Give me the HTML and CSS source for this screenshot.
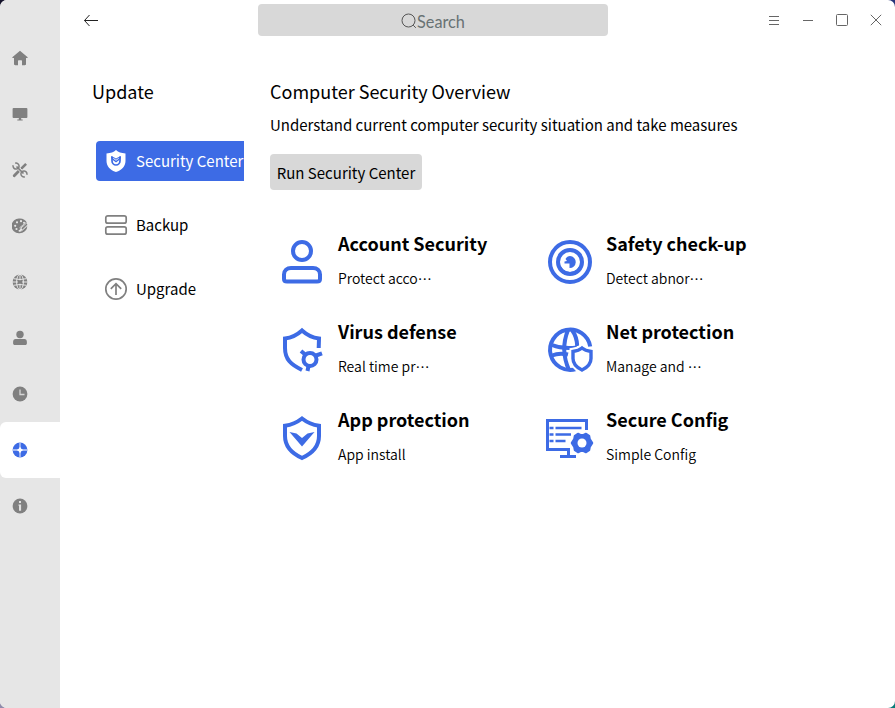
FILE: index.html
```html
<!DOCTYPE html>
<html lang="zh-CN">
<head>
<meta charset="utf-8">
<title>Update</title>
<link rel="stylesheet" href="styles.css">
</head>
<body>
<div class="window">
  <nav class="rail">
    <a class="rail-item"><svg viewBox="0 0 16 16"><path d="M8 .7 15.4 7c.5.5.3 1-.3 1H14v6c0 .8-.4 1.2-1.2 1.2H10v-4c0-.7-.3-1-1-1H7c-.7 0-1 .3-1 1v4H3.2c-.8 0-1.2-.4-1.2-1.2V8H.9C.3 8 .1 7.500.6 7z"/></svg></a>
    <a class="rail-item"><svg viewBox="0 0 16 16"><path d="M1.500 2h13c.6 0 .9.3.9.9v8.200c0 .6-.3.9-.9.900H9.200v1.500h1.500v1H5.300v-1h1.500V12H1.500c-.6 0-.9-.3-.9-.9V2.900c0-.6.3-.9.900-.9z"/></svg></a>
    <a class="rail-item"><svg viewBox="0 0 16 16"><path d="m2.200 13.800 4.400-4.500" fill="none" stroke="#808080" stroke-width="2.800" stroke-linecap="round"/><path d="m9.300 6.700 4.800-4.800" stroke="#808080" stroke-width="2.600"/><path d="m6 10 4-4" stroke="#808080" stroke-width="1"/><path d="m4.500 4.500 7 7" stroke="#e6e6e6" stroke-width="3"/><path d="m4.500 4.500 7 7" stroke="#808080" stroke-width="1.700"/><path d="M3.200 1.200A3 3 0 1 1 1.200 3.200M12.800 14.800A3 3 0 1 1 14.800 12.800" fill="none" stroke="#808080" stroke-width="1.500"/></svg></a>
    <a class="rail-item"><svg viewBox="0 0 16 16"><path d="M8 .6c3.200 0 5.800 1.700 6.900 4.200L9 9.200c-.8.700-.3 1.800-1.300 2.500-.6.400-1.200.3-1.200 1.100 0 .7.900 1.100 1.900.9l6.700-6.200c.8 4.500-3.500 7.900-7.600 7.800A7.400 7.400 0 1 1 8 .6z"/><path d="m9.500 10 5.300-4.800.5 1.500-5.100 5z"/><g fill="#e6e6e6"><circle cx="5" cy="4.300" r="1.100"/><circle cx="9" cy="3.200" r="1.100"/><circle cx="12" cy="4.800" r="1"/><circle cx="3.200" cy="7.800" r="1.100"/><circle cx="4.500" cy="11" r="1.100"/></g><path d="m7.500 9.800 7-5.600M9.500 13l6-5.200" stroke="#e6e6e6" stroke-width=".8"/></svg></a>
    <a class="rail-item"><svg viewBox="0 0 16 16"><circle cx="8" cy="8" r="7.400"/><g fill="none" stroke="#e6e6e6" stroke-width="1"><ellipse cx="8" cy="8" rx="3.400" ry="7.700"/><path d="M8 0v16M0 8h16M1.500 4.700Q8 6.300 14.500 4.700M1.500 11.300Q8 9.700 14.500 11.300"/></g><rect x="6" y="6.300" width="4" height="3.400"/></svg></a>
    <a class="rail-item"><svg viewBox="0 0 16 16"><circle cx="8" cy="4.500" r="3.700"/><path d="M3.600 9h8.800c1.600 0 2.500 1.200 2.500 3v1.600c0 .9-.7 1.500-1.600 1.500H2.700c-.9 0-1.600-.6-1.600-1.500V12c0-1.800.9-3 2.500-3z"/></svg></a>
    <a class="rail-item"><svg viewBox="0 0 16 16"><circle cx="8" cy="8" r="7.400"/><path d="M8 3.500v5h4.500" fill="none" stroke="#d6d6d6" stroke-width="1.300"/></svg></a>
    <a class="rail-item active"><svg viewBox="0 0 16 16"><circle cx="8" cy="8" r="7.400"/><path d="M8 .5v15M.5 8h15" stroke="#c5d2f8" stroke-width="1.300"/><path d="M8 4.800 9.300 6.700 11.200 8 9.300 9.300 8 11.200 6.700 9.300 4.800 8 6.700 6.700z" fill="#fff"/></svg></a>
    <a class="rail-item"><svg viewBox="0 0 16 16"><circle cx="8" cy="8" r="7.400"/><path d="M8 3v2" stroke="#e0e0e0" stroke-width="2"/><path d="M6.500 6.500h2.600v6.300H7V7.700h-.5z" fill="#e0e0e0"/></svg></a>
  </nav>
  <div class="main">
    <header class="bar">
      <svg class="back" viewBox="0 0 16 16"><path d="M6.500 3 1.500 8.500l5 5.500M1.500 8.500H15"/></svg>
      <div class="search"><svg viewBox="0 0 16 16"><circle cx="7.500" cy="7.500" r="6.500"/><path d="m12.200 12.200 2.600 2.600"/></svg><span>Search</span></div>
      <div class="controls">
        <svg viewBox="0 0 16 16"><path d="M3 4.500h10M3 8.500h10M3 12.500h10"/></svg>
        <svg viewBox="0 0 16 16"><path d="M3 8.500h10"/></svg>
        <svg viewBox="0 0 16 16"><rect x="2.500" y="2.500" width="11" height="11" rx="1"/></svg>
        <svg viewBox="0 0 16 16"><path d="m2.800 2.800 10.400 10.400M13.200 2.800 2.800 13.200"/></svg>
      </div>
    </header>
    <div class="body">
      <aside class="side">
        <h1 class="heading">Update</h1>
        <ul class="menu">
          <li class="menu-item selected"><svg viewBox="0 0 24 24"><path d="M12 1c2.500 2.200 5 3 9.500 3.500V12c0 5-3.500 9-9.500 11C6 21 2.500 17 2.500 12V4.500C7 4 9.500 3.200 12 1z" fill="#fff"/><path d="M8 7.500v4.300c0 2.300 1.700 4.200 4 4.200s4-1.900 4-4.200V7.500" fill="none" stroke="#3d6be5" stroke-width="1.700"/><path d="M7.200 7l3 1.500L12 9.500l1.800-1 3-1.500v2l-1.500 2L12 13.500 8.700 11 7.200 9z" fill="#3d6be5"/><path d="m9.800 7 2.200 1.400L14.200 7z" fill="#fff"/><path d="m9.300 9.300 2.700 2 2.700-2" fill="none" stroke="#fff" stroke-width=".9"/></svg><span>Security Center</span></li>
          <li class="menu-item"><svg viewBox="0 0 24 24"><g fill="none" stroke="#808080" stroke-width="1.700"><rect x="1.800" y="2.800" width="20.400" height="7.400" rx="2"/><rect x="1.800" y="13.800" width="20.400" height="7.400" rx="2"/></g></svg><span>Backup</span></li>
          <li class="menu-item"><svg viewBox="0 0 24 24"><g fill="none" stroke="#808080" stroke-width="1.700"><circle cx="12" cy="12" r="10.200"/><path d="M12 18V7M6.800 11.800 12 6.600l5.200 5.200"/></g></svg><span>Upgrade</span></li>
        </ul>
      </aside>
      <main class="content">
        <h2 class="heading overview">Computer Security Overview</h2>
        <p class="lead">Understand current computer security situation and take measures</p>
        <button class="run">Run Security Center</button>
        <div class="cards">
          <article class="card"><svg viewBox="0 0 48 48"><g class="line"><circle cx="24" cy="13" r="9"/><path d="M13 30.500h22c4 0 7 2.500 7 6.500v4.500c0 1.700-1.300 2.500-3 2.500H9c-1.700 0-3-.8-3-2.500V37c0-4 3-6.500 7-6.500z" transform="translate(0 -.5)"/></g></svg><div><h3 class="name">Account Security</h3><p class="desc">Protect acco<span class="dots">…</span></p></div></article>
          <article class="card"><svg viewBox="0 0 48 48"><g class="line"><circle cx="24" cy="24" r="20"/><circle cx="24" cy="24" r="12"/></g><path class="solid" d="M24 18a6 6 0 1 1-.5 12v-4.500h-5v-2l2.500-.5-1.500-2c1-2 2.700-3 4.500-3z"/><path class="solid" d="M14 27l3.500 5c4 2.500 9 2.500 13 0l3.500-5 0 5-5 5H19l-5-5z"/></svg><div><h3 class="name">Safety check-up</h3><p class="desc">Detect abnor<span class="dots">…</span></p></div></article>
          <article class="card"><svg viewBox="0 0 48 48"><g class="line"><path d="M24 44C13 38.500 7 33.500 7 22v-9.500c7-.8 11-2.500 17-8 6 5.500 10 7.200 17 8L40.700 22"/><circle cx="32" cy="33.500" r="6.500"/><path d="m23 25 4.500 3.800M38 29.500l6-2.200M30.500 40l-1 5"/></g></svg><div><h3 class="name">Virus defense</h3><p class="desc">Real time pr<span class="dots">…</span></p></div></article>
          <article class="card"><svg viewBox="0 0 48 48"><g class="line"><path d="M44.200 20.500A20.200 20.200 0 1 0 30 43.200"/><path d="M6 19Q17 23.500 31 21.500M6 29.500Q13 26.500 22 28.500"/><path d="M22 4Q14 24 23 44M26 4Q31 11 31.200 20"/><path d="M36 21.500c2.700 2.500 5.500 3.200 9 3.700v7.300c0 6-3.700 9.500-9 12-5.300-2.500-9-6-9-12v-7.300c3.500-.5 6.300-1.200 9-3.700z" fill="#fff" stroke="#fff" stroke-width="7"/><path d="M36 22c2.700 2.300 5.500 3 9 3.500v7c0 5.500-3.700 9-9 11.500-5.300-2.500-9-6-9-11.500v-7c3.500-.5 6.300-1.200 9-3.500z" stroke-width="3.400"/></g></svg><div><h3 class="name">Net protection</h3><p class="desc">Manage and <span class="dots">…</span></p></div></article>
          <article class="card"><svg viewBox="0 0 48 48"><path class="line" d="M24 4.500c6 4.700 10 6.300 17 7.200V22c0 10.500-6 17-17 22C13 39 7 32.500 7 22V11.700c7-.9 11-2.500 17-7.200z"/><path class="solid" d="m11.500 18 7 1.500 5.500 4.500 5.500-4.500 7-1.500L24 32.500z"/></svg><div><h3 class="name">App protection</h3><p class="desc">App install</p></div></article>
          <article class="card"><svg viewBox="0 0 48 48"><g class="line thin"><path d="M40.500 16V6.500H1.500v29H24M22.500 36v6M14 42.500h16"/><path d="M3.500 14h4M9.500 14h26M3.500 20.500h4M9.500 20.500H25M3.500 27h4M9.500 27h10" stroke-width="2.600"/></g><path d="M32 20l3 1.300h2L40 20l3 2 .6 3.300 2.400 3.700-2.400 3.700L43 36l-3 2-3-1.300h-2L32 38l-3-2-.6-3.300L26 29l2.400-3.700L29 22z" class="solid" stroke="#3d6be5" stroke-width="2.500" stroke-linejoin="round"/><circle cx="36" cy="29" r="4.500" fill="#fff"/></svg><div><h3 class="name">Secure Config</h3><p class="desc">Simple Config</p></div></article>
        </div>
      </main>
    </div>
  </div>
</div>
</body>
</html>
```
FILE: styles.css
```css
* { box-sizing: border-box; }
body {
  margin: 0;
  background:
    linear-gradient(90deg, #8f8cab 50%, #087a78 50%) 0 100% / 100% 50% no-repeat,
    linear-gradient(90deg, #14122a 50%, #26347a 50%);
  font-family: "Noto Sans CJK SC", sans-serif;
  color: #000;
}
.window {
  display: flex;
  width: 895px;
  height: 708px;
  overflow: hidden;
  background: #fff;
  border-radius: 7px;
}
svg { display: block; flex: none; }
.rail { width: 60px; padding-top: 30px; background: #e6e6e6; }
.rail-item { display: flex; align-items: center; height: 56px; padding-left: 12px; }
.rail-item svg { width: 16px; height: 16px; fill: #808080; }
.rail-item.active { background: #fff; border-radius: 6px 0 0 6px; }
.rail-item.active svg { fill: #3d6be5; }
.main { flex: 1; }
.bar { display: flex; height: 40px; padding: 4px 11px 4px 23px; }
.back { width: 16px; height: 16px; margin-top: 8px; fill: none; stroke: #222; stroke-width: 1; }
.search {
  display: flex;
  justify-content: center;
  align-items: center;
  width: 350px;
  height: 32px;
  margin-left: 159px;
  border-radius: 4px;
  background: #d8d8d8;
  color: #687273;
  font: 16.300px/20px Lato, sans-serif;
}
.search svg { width: 16px; height: 16px; margin-top: 2px; fill: none; stroke: #555; stroke-width: 1; }
.search span { padding-top: 4px; }
.controls { display: flex; gap: 18px; margin: 8px 0 0 auto; }
.controls svg { width: 16px; height: 16px; fill: none; stroke: #666; stroke-width: 1; }
.body { display: flex; }
.side { width: 184px; padding: 38px 0 0 32px; overflow: hidden; }
.heading { margin: 0; font-size: 18px; line-height: 27px; font-weight: 400; white-space: nowrap; }
.menu { display: grid; gap: 24px; margin: 36px 0 0 4px; padding: 0; list-style: none; }
.menu-item { display: flex; align-items: center; gap: 8px; height: 40px; padding-left: 8px; font-size: 15px; white-space: nowrap; }
.menu-item svg { width: 24px; height: 24px; }
.menu-item span { padding-bottom: 2px; }
.selected { background: #3d6be5; color: #fff; border-radius: 4px 0 0 4px; }
.content { flex: 1; padding: 38px 0 0 26px; }
.lead { margin: 8px 0 0; font-size: 15px; line-height: 24px; white-space: nowrap; }
.run {
  display: block;
  width: 152px;
  height: 36px;
  margin-top: 17px;
  padding: 0;
  border: 0;
  border-radius: 4px;
  background: #d8d8d8;
  color: #000;
  font: 15px "Noto Sans CJK SC", sans-serif;
  white-space: nowrap;
}
.cards { display: grid; grid-template-columns: 268px 268px; grid-auto-rows: 88px; margin: 40px 0 0 8px; }
.card { display: flex; gap: 12px; }
.card svg { width: 48px; height: 48px; margin-top: 8px; }
.line { fill: none; stroke: #3d6be5; stroke-width: 4; }
.thin { stroke-width: 3; }
.solid { fill: #3d6be5; }
.name { margin: 0; font-size: 18px; line-height: 27px; font-weight: 700; white-space: nowrap; }
.desc { margin: 10px 0 0; font-size: 14px; line-height: 22px; font-weight: 350; white-space: nowrap; }
```
